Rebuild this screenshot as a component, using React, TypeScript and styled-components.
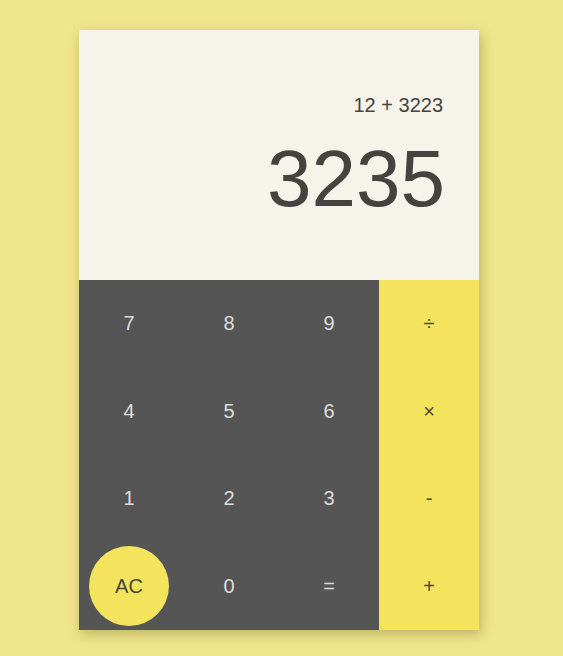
import styled, { createGlobalStyle } from "styled-components";

const GlobalStyle = createGlobalStyle`
  html, body {
    margin: 0;
    padding: 0;
    background: #f0e68c;
    font-family: "Liberation Sans", Arial, sans-serif;
  }
`;

const Page = styled.div`
  min-height: 656px;
  padding: 30px 0 0 79px;
  box-sizing: border-box;
`;

const Calculator = styled.div`
  width: 400px;
  height: 600px;
  display: flex;
  flex-direction: column;
  box-shadow: 2px 4px 12px rgba(90, 80, 20, 0.35);
`;

const Display = styled.div`
  height: 250px;
  background: #f6f3ea;
  display: flex;
  flex-direction: column;
  align-items: flex-end;
  padding: 63px 36px 0 0;
  box-sizing: border-box;
  color: #454340;
`;

const Expression = styled.div`
  font-size: 20px;
  line-height: 24px;
`;

const Result = styled.div`
  font-size: 80px;
  line-height: 92px;
  margin-top: 16px;
  margin-right: -2px;
`;

const Keypad = styled.div`
  flex: 1;
  display: grid;
  grid-template-columns: repeat(4, 100px);
  grid-template-rows: repeat(4, 1fr);
  background: #555555;
`;

const Key = styled.div<{ $op?: boolean }>`
  display: flex;
  align-items: center;
  justify-content: center;
  font-size: 20px;
  color: ${(p) => (p.$op ? "#4a4636" : "#dddddd")};
  background: ${(p) => (p.$op ? "#f4e35c" : "transparent")};
`;

const ClearButton = styled.div`
  width: 80px;
  height: 80px;
  border-radius: 50%;
  background: #f4e35c;
  color: #4a4636;
  font-size: 20px;
  display: flex;
  align-items: center;
  justify-content: center;
`;

const rows: string[][] = [
  ["7", "8", "9", "÷"],
  ["4", "5", "6", "×"],
  ["1", "2", "3", "-"],
  ["AC", "0", "=", "+"],
];

export default function App() {
  return (
    <>
      <GlobalStyle />
      <Page>
        <Calculator>
          <Display>
            <Expression>12 + 3223</Expression>
            <Result>3235</Result>
          </Display>
          <Keypad>
            {rows.flat().map((k, i) => (
              <Key key={k} $op={i % 4 === 3}>
                {k === "AC" ? <ClearButton>AC</ClearButton> : k}
              </Key>
            ))}
          </Keypad>
        </Calculator>
      </Page>
    </>
  );
}
